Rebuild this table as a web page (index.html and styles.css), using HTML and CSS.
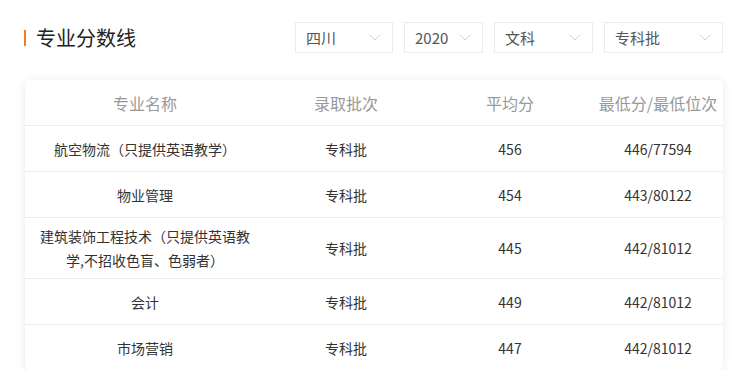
FILE: index.html
```html
<!DOCTYPE html>
<html lang="zh-CN">
<head>
<meta charset="utf-8">
<title>专业分数线</title>
<link rel="stylesheet" href="styles.css">
</head>
<body>
<div class="top">
  <h2 class="title">专业分数线</h2>
  <div class="filters">
    <div class="select w98"><span>四川</span><svg class="chev" width="12" height="7" viewBox="0 0 12 7"><polyline points="0.5,0.5 6,6 11.5,0.5"/></svg></div>
    <div class="select w79"><span>2020</span><svg class="chev" width="12" height="7" viewBox="0 0 12 7"><polyline points="0.5,0.5 6,6 11.5,0.5"/></svg></div>
    <div class="select w99"><span>文科</span><svg class="chev" width="12" height="7" viewBox="0 0 12 7"><polyline points="0.5,0.5 6,6 11.5,0.5"/></svg></div>
    <div class="select w119"><span>专科批</span><svg class="chev" width="12" height="7" viewBox="0 0 12 7"><polyline points="0.5,0.5 6,6 11.5,0.5"/></svg></div>
  </div>
</div>
<div class="card">
  <table class="scores">
    <colgroup>
      <col class="c1"><col class="c2"><col class="c3"><col class="c4">
    </colgroup>
    <thead>
      <tr>
        <th>专业名称</th>
        <th>录取批次</th>
        <th>平均分</th>
        <th>最低分/最低位次</th>
      </tr>
    </thead>
    <tbody>
      <tr>
        <td>航空物流（只提供英语教学）</td>
        <td>专科批</td>
        <td>456</td>
        <td>446/77594</td>
      </tr>
      <tr>
        <td>物业管理</td>
        <td>专科批</td>
        <td>454</td>
        <td>443/80122</td>
      </tr>
      <tr>
        <td><div class="name">建筑装饰工程技术（只提供英语教学,不招收色盲、色弱者）</div></td>
        <td>专科批</td>
        <td>445</td>
        <td>442/81012</td>
      </tr>
      <tr>
        <td>会计</td>
        <td>专科批</td>
        <td>449</td>
        <td>442/81012</td>
      </tr>
      <tr>
        <td>市场营销</td>
        <td>专科批</td>
        <td>447</td>
        <td>442/81012</td>
      </tr>
    </tbody>
  </table>
</div>
</body>
</html>
```
FILE: styles.css
```css
html, body {
  margin: 0;
  padding: 0;
  background: #fff;
}
body {
  font-family: "Microsoft YaHei", "Noto Sans CJK SC", "Noto Sans", sans-serif;
  color: #333;
}
.top {
  display: flex;
  align-items: center;
  height: 31px;
  margin: 22px 29px 0 24px;
}
.title {
  margin: 0;
  border-left: 2px solid #f47b20;
  padding-left: 10px;
  height: 16px;
  line-height: 16px;
  font-size: 20px;
  font-weight: normal;
  color: #222;
  display: flex;
  align-items: center;
}
.filters {
  margin-left: auto;
  display: flex;
  gap: 11px;
}
.select {
  box-sizing: border-box;
  height: 31px;
  border: 1px solid #ebebeb;
  display: flex;
  align-items: center;
  justify-content: space-between;
  padding: 0 11px 0 10px;
  font-size: 15px;
  color: #555;
}
.w98 { width: 98px; }
.w79 { width: 79px; }
.w99 { width: 99px; }
.w119 { width: 119px; }
.chev polyline {
  fill: none;
  stroke: #cfcfcf;
  stroke-width: 1;
}
.card {
  margin: 27px 29px 0 25px;
  border-radius: 5px;
  background: #fff;
  box-shadow: 0 1px 10px rgba(0, 0, 0, 0.09);
  overflow: hidden;
}
.scores {
  width: 100%;
  table-layout: fixed;
  border-collapse: separate;
  border-spacing: 0;
}
.c1 { width: 240px; }
.c2 { width: 162px; }
.c3 { width: 166px; }
.scores th,
.scores td {
  box-sizing: border-box;
  height: 46px;
  padding: 6px 12px;
  border-bottom: 1px solid #ececec;
  text-align: center;
  vertical-align: middle;
  line-height: 24px;
}
.scores th {
  font-size: 16px;
  font-weight: normal;
  color: #999;
  white-space: nowrap;
  padding: 6px 0;
}
.scores td {
  font-size: 14px;
  color: #333;
}
.name {
  text-align: center;
}
.scores tbody tr:last-child td {
  border-bottom: none;
  height: 45px;
}
```
